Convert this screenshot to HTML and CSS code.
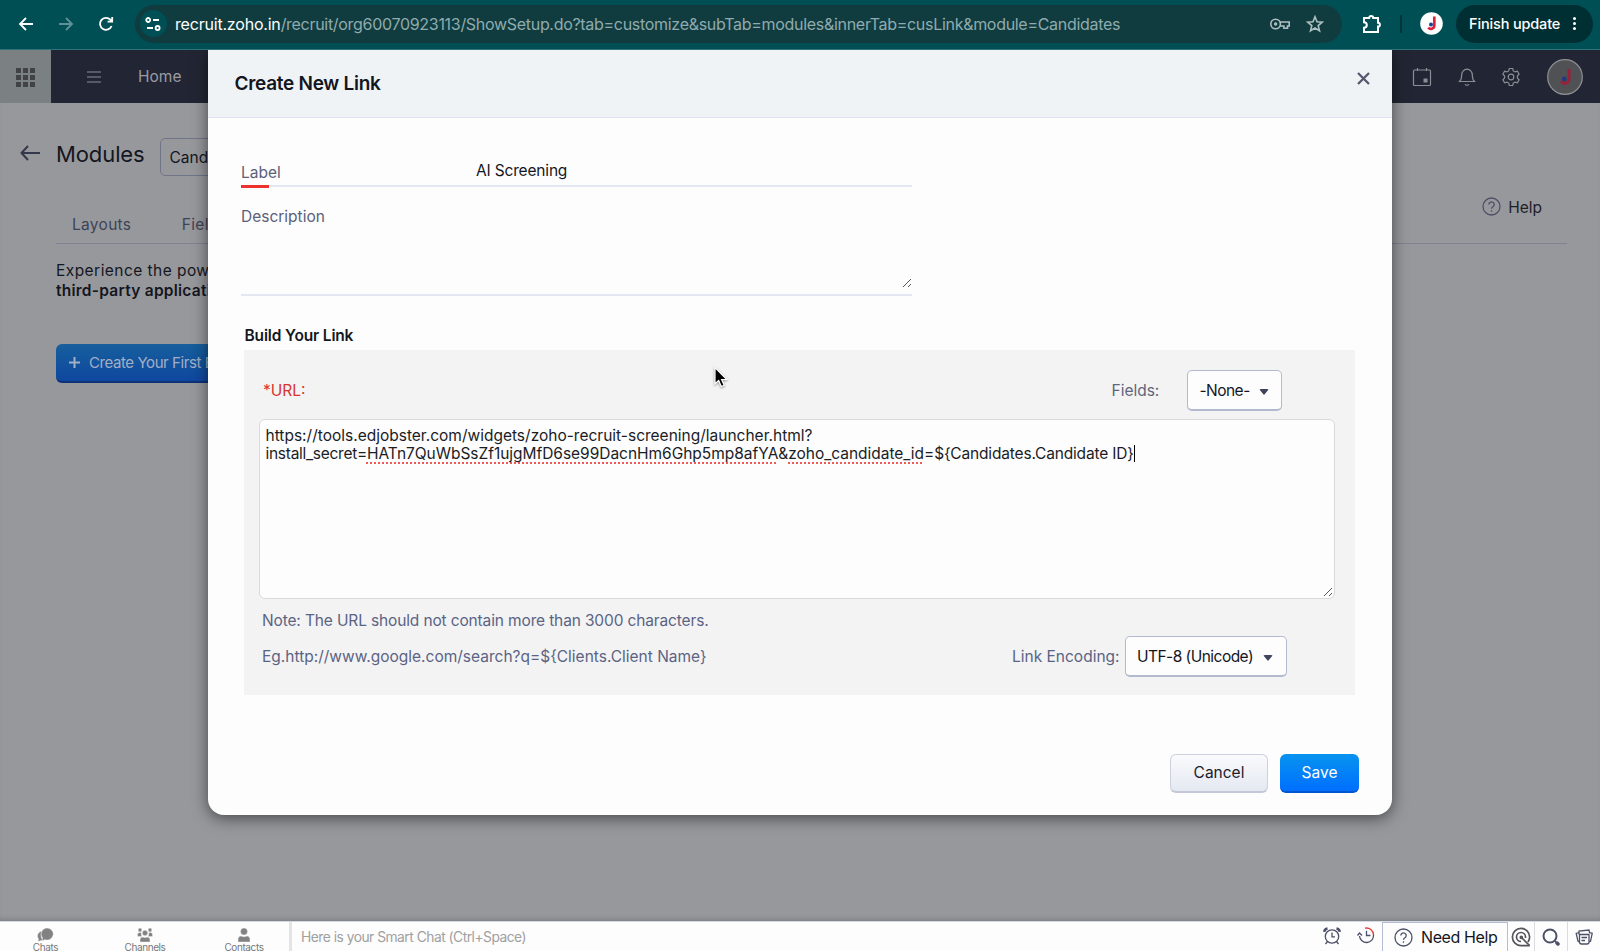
FILE: index.html
```
<!DOCTYPE html>
<html lang="en">
<head>
  <meta charset="UTF-8" />
  <meta name="viewport" content="width=device-width, initial-scale=1.0"/>
  <title>Create New Link - Zoho Recruit</title>
  <link rel="stylesheet" href="styles.css">
</head>
<body>
  <!-- Browser toolbar -->
  <div class="browser">
    <div class="browser-nav">
      <svg width="16" height="16" viewBox="0 0 16 16"><path d="M8 2 2 8l6 6M2 8h13"/></svg>
      <svg class="dim" width="16" height="16" viewBox="0 0 16 16"><path d="M8 2l6 6-6 6M14 8H1"/></svg>
      <svg width="16" height="16" viewBox="0 0 16 16"><path d="M13.6 10A6 6 0 1 1 12.4 3.7L14 5.4M14.2 1v4.6H9.6"/></svg>
    </div>
    <div class="address">
      <span class="site-info">
        <svg width="16" height="14" viewBox="0 0 16 14"><circle cx="3.2" cy="3" r="2"/><path d="M8 3h6M2 11h6"/><circle cx="12.6" cy="11" r="2"/></svg>
      </span>
      <span class="url"><b>recruit.zoho.in</b>/recruit/org60070923113/ShowSetup.do?tab=customize&amp;subTab=modules&amp;innerTab=cusLink&amp;module=Candidates</span>
      <svg class="key" width="20" height="12" viewBox="0 0 20 12"><circle cx="5.6" cy="6" r="4.8"/><circle class="dot" cx="5.6" cy="6" r="1.7"/><path d="M10 4h9.2v4h-1.7v2.2h-3.6V8H10"/></svg>
      <svg class="star" width="18" height="18" viewBox="0 0 18 18"><path d="M9 1.8l2 5 5.3.4-4.1 3.4 1.3 5.2L9 13l-4.500 2.800 1.300-5.200L1.700 7.200 7 6.800z"/></svg>
    </div>
    <svg class="puzzle" width="20" height="20" viewBox="0 0 20 20"><path d="M2 4h5.200a2 2 0 0 1 4 0H16v4.800a1.900 1.900 0 0 1 0 3.800V18H2v-4.200a2.800 2.800 0 0 0 0-5.600z"/></svg>
    <span class="bar"></span>
    <svg class="profile" width="23" height="23" viewBox="0 0 23 23"><circle cx="11.500" cy="11.500" r="11.300" fill="#fff"/><path d="M14.300 4.500v9.200a3.300 3.300 0 0 1-6 1.700" stroke="#e0203c" stroke-width="2.700" fill="none"/><circle cx="11" cy="12.600" r="2" fill="#21418f"/></svg>
    <div class="update"><span>Finish update</span><i></i></div>
  </div>

  <div class="app">
    <!-- Page behind the dialog -->
    <div class="topbar">
      <div class="waffle"><i></i><i></i><i></i><i></i><i></i><i></i><i></i><i></i><i></i></div>
      <svg class="burger" width="14" height="12" viewBox="0 0 14 12"><path d="M0 1h14M0 6h14M0 11h14"/></svg>
      <span class="home">Home</span>
      <div class="topbar-icons">
        <svg width="20" height="20" viewBox="0 0 20 20"><path d="M2.500 3h15q1 0 1 1v13.500q0 1-1 1h-15q-1 0-1-1V4q0-1 1-1zM5.500 1v3M14.500 1v3"/><path class="solid" d="M11.500 11.500h4v4h-4z"/></svg>
        <svg width="18" height="20" viewBox="0 0 18 20"><path d="M1.500 14.500c2-1.800 2.200-3 2.200-6.500a5.300 5.800 0 0 1 10.600 0c0 3.500.2 4.700 2.200 6.500zM7 17.300a2.200 1.600 0 0 0 4 0"/></svg>
        <svg width="20" height="20" viewBox="0 0 20 20"><circle cx="10" cy="10" r="2.800"/><path d="M8.300 1.500h3.400l.6 2.400 1.700 1 2.400-.7 1.700 2.900L16.400 9v2l1.700 1.900-1.700 2.900-2.400-.7-1.700 1-.6 2.400H8.300l-.6-2.400-1.700-1-2.400.7-1.700-2.900L3.600 11V9L1.900 7.100l1.700-2.900 2.400.7 1.700-1z"/></svg>
        <svg class="me" width="36" height="36" viewBox="0 0 36 36"><circle cx="18" cy="18" r="17.300" fill="#505155" stroke="#8e9094"/><path d="M22 10v10.500a4 4 0 0 1-7.600 1.600" stroke="#98203a" stroke-width="3" fill="none"/><circle cx="17.300" cy="20" r="2.400" fill="#203a7c"/></svg>
      </div>
    </div>
    <div class="page">
      <div class="page-head">
        <svg width="20" height="16" viewBox="0 0 20 16"><path d="M8 1 1.500 8 8 15M1.500 8H20"/></svg>
        <h1>Modules</h1>
        <span class="module-select">Candidates</span>
      </div>
      <div class="tabs">
        <span>Layouts</span>
        <span>Fields</span>
        <span class="help"><svg width="19" height="19" viewBox="0 0 19 19"><circle cx="9.500" cy="9.500" r="8.500"/><path d="M6.800 7.600a2.700 2.600 0 1 1 4.200 2.100c-1 .7-1.500 1-1.500 2.100M9.500 13.300v1.400"/></svg>Help</span>
      </div>
      <p>Experience the power<br><b>third-party applications</b></p>
      <span class="create"><svg width="11" height="11" viewBox="0 0 11 11"><path d="M5.500 0v11M0 5.500h11"/></svg>Create Your First Button</span>
    </div>

    <!-- Create link dialog -->
    <div class="modal">
      <div class="modal-head">
        <h2>Create New Link</h2>
        <svg width="13" height="13" viewBox="0 0 13 13"><path d="M1 1l11 11M12 1 1 12"/></svg>
      </div>
      <div class="field label-field"><label>Label</label><span>AI Screening</span></div>
      <div class="field desc-field"><label>Description</label>
        <svg class="grip" width="10" height="10" viewBox="0 0 10 10"><path d="M1 9 9 1M6 9l3-3"/></svg>
      </div>
      <h3>Build Your Link</h3>
      <div class="builder">
        <div class="row url-row">
          <span class="required">*URL:</span>
          <span class="fields-label">Fields:</span>
          <span class="select fields">-None-<i></i></span>
        </div>
        <div class="textarea">
          <div>https://tools.edjobster.com/widgets/zoho-recruit-screening/launcher.html?</div>
          <div><span class="param">install_secret=</span><u>HATn7QuWbSsZf1ujgMfD6se99DacnHm6Ghp5mp8afYA</u>&amp;<u>zoho_candidate_id</u><span class="merge">=${Candidates.Candidate ID}</span><i class="caret"></i></div>
          <svg class="grip" width="10" height="10" viewBox="0 0 10 10"><path d="M1 9 9 1M6 9l3-3"/></svg>
        </div>
        <div class="note">Note: The URL should not contain more than 3000 characters.</div>
        <div class="row encoding-row">
          <span class="example">Eg.http://www.google.com/search?q=${Clients.Client Name}</span>
          <span class="encoding-label">Link Encoding:</span>
          <span class="select encoding">UTF-8 (Unicode)<i></i></span>
        </div>
      </div>
      <div class="actions">
        <button class="cancel">Cancel</button>
        <button class="save">Save</button>
      </div>
    </div>
    <svg class="pointer" width="18" height="24" viewBox="0 0 18 24"><path d="M3 1.500v16.300l3.700-3.300 2.600 6 2.900-1.200-2.600-5.800h5.200z"/></svg>
  </div>

  <!-- Chat bar -->
  <div class="chatbar">
    <div class="chat-tabs">
      <div><svg width="17" height="14" viewBox="0 0 17 14"><path d="M5 3A5 5 0 0 0 1.500 11L1 13.500 4 12.600h3C4 11 3 7 5 3z"/><path d="M10 0a6.300 6 0 1 1-2 11.700L5 12.500l.6-2.500A6.100 6.100 0 0 1 10 0z"/></svg>Chats</div>
      <div><svg width="16" height="14" viewBox="0 0 16 14"><circle cx="3" cy="2" r="1.900"/><circle cx="13" cy="2" r="1.900"/><circle cx="8" cy="5" r="2.700"/><path d="M.5 8.500V6.500q0-2 2-2h1.800Q4 7 5 8.500zM15.500 8.500V6.500q0-2-2-2h-1.800Q12 7 11 8.500zM3 14v-2q0-3 3-3 2 1 4 0 3 0 3 3v2z"/></svg>Channels</div>
      <div><svg width="14" height="14" viewBox="0 0 14 14"><circle cx="7" cy="3.500" r="3.500"/><path d="M1 14v-2.500Q1 8 4 8q3 1.500 6 0 3 0 3 3.500V14z"/></svg>Contacts</div>
    </div>
    <div class="smart">Here is your Smart Chat (Ctrl+Space)</div>
    <div class="tools">
      <svg class="alarm" width="18" height="18" viewBox="0 0 18 18"><circle cx="9" cy="9.500" r="6.700"/><path d="M9 5.500v4.300h3M4.500 14.500 2.500 17M13.500 14.500l2 2.500"/><path class="bells" d="M1.200 4.800Q1.500 2 4.500 1.500M16.800 4.800Q16.500 2 13.500 1.500"/></svg>
      <svg class="history" width="18" height="18" viewBox="0 0 18 18"><path d="M2.500 10A7 7 0 1 0 16.500 9M9.500 4.800v4.700h4M.5 9.500l2-2.500L5 9.500"/><path class="red" d="M8 2.200A7 7 0 0 1 16.500 9"/></svg>
      <div class="need"><svg width="19" height="19" viewBox="0 0 19 19"><circle cx="9.500" cy="9.500" r="8.500"/><path d="M6.800 7.600a2.700 2.600 0 1 1 4.200 2.100c-1 .7-1.500 1-1.500 2.100M9.500 13.300v1.400"/></svg>Need Help</div>
      <div class="cell zia"><svg width="20" height="20" viewBox="0 0 20 20"><path d="M18.800 18.600H10A8.600 8.600 0 1 1 18.600 10c0 2-.6 3.600-1.600 5M10 14.500A4.500 4.500 0 1 1 14.500 10v1"/><path d="M10.500 10.500l8 8"/><circle cx="10.300" cy="10.300" r="1"/></svg></div>
      <div class="cell search"><svg width="18" height="18" viewBox="0 0 18 18"><circle cx="8" cy="8" r="6.500"/><path d="M13 13l1 1"/><path class="handle" d="M15 15l1 1"/></svg></div>
      <div class="cell cards"><svg width="18" height="18" viewBox="0 0 18 18"><path d="M4.500 6.500h9.500v7.500q0 2-2 2H6.500q-2 0-2-2zM6.500 9.500h5.500M6.500 12.500h3.500M4.500 14l-1.500-.7L1.200 5.500 4 4.500M4 6.500V3L14 2l.5 2.500 2.700.8L15.500 13.300 14 14"/></svg></div>
    </div>
  </div>
</body>
</html>
```
FILE: styles.css
```
* { box-sizing: border-box; }

body {
  margin: 0;
  height: 951px;
  display: flex;
  flex-direction: column;
  overflow: hidden;
  font-family: Inter, "Liberation Sans", sans-serif;
  font-size: 15.5px;
  line-height: 20px;
  color: #14161f;
  background: #97989c;
}

h1, h2, h3, p { margin: 0; }

svg {
  display: block;
  flex: none;
  fill: none;
  stroke: #4c5068;
  stroke-width: 1.3;
}

/* browser toolbar */
.browser {
  height: 50px;
  flex: none;
  display: flex;
  align-items: center;
  background: #004f55;
  border-bottom: 1px solid #2f7277;
  padding: 0 7px 2px 18px;
}
.browser svg { stroke: #fff; stroke-width: 1.8; }
.browser svg.dim { stroke: #5f9296; }
.browser-nav { display: flex; gap: 24px; width: 117px; margin-left: -0.5px; }
.address {
  width: 1207px;
  height: 38px;
  border-radius: 19px;
  background: #103c40;
  display: flex;
  align-items: center;
  padding: 0 18px 0 5px;
}
.site-info {
  width: 27px;
  height: 27px;
  border-radius: 50%;
  background: #004f55;
  display: flex;
  align-items: center;
  justify-content: center;
}
.url {
  flex: 1;
  margin-left: 8.5px;
  font-size: 16px;
  letter-spacing: -0.3px;
  color: #8fabad;
  white-space: nowrap;
}
.url b { font-weight: 400; letter-spacing: -0.2px; color: #fff; }
.browser .key, .browser .star { stroke: #b0bfc1; stroke-width: 1.6; }
.browser .dot { fill: #b0bfc1; stroke: none; }
.star { margin-left: 16px; }
.browser .puzzle { margin-left: 20px; stroke-width: 2; }
.bar { width: 2px; height: 18px; margin: 0 18px; background: #00363a; }
.browser .profile { stroke: none; }
.update {
  width: 137px;
  height: 38px;
  border-radius: 19px;
  margin-left: auto;
  padding: 0 17px 0 13px;
  display: flex;
  align-items: center;
  justify-content: space-between;
  background: #002f33;
  color: #fff;
  font-size: 14.5px;
  font-weight: 500;
  letter-spacing: -0.15px;
}
.update i {
  width: 3px;
  height: 3px;
  border-radius: 50%;
  background: #fff;
  box-shadow: 0 -5px #fff, 0 5px #fff;
}

/* page behind the dialog */
.app { flex: 1; position: relative; overflow: hidden; box-shadow: inset 0 -5px 5px -3px #7f8084; }
.topbar {
  height: 53px;
  display: flex;
  align-items: center;
  background: #222634;
  color: #9a9ca2;
}
.topbar svg { stroke: #8b8d94; stroke-width: 1.2; }
.waffle {
  width: 51px;
  height: 53px;
  padding: 18px 16px 0;
  display: grid;
  grid-template-columns: repeat(3, 5px);
  grid-auto-rows: 5px;
  gap: 2px;
  background: #7b8082;
}
.waffle i { background: #404246; }
.burger { margin-left: 36px; }
.home { margin-left: 37px; }
.topbar-icons { display: flex; align-items: center; margin-left: auto; padding-right: 17.5px; gap: 25.5px; }
.topbar .solid { fill: #8b8d94; stroke: none; }
.topbar .me { stroke: none; }

.page { padding: 30px 33px 0 20px; }
.page-head { display: flex; align-items: center; height: 42px; }
.page-head svg { stroke: #34384c; stroke-width: 2; margin-bottom: 2px; }
h1 { margin-left: 16px; width: 103.5px; font-size: 22px; font-weight: 400; line-height: 26px; letter-spacing: -0.1px; }
.module-select {
  width: 120px;
  height: 38px;
  margin-top: 5px;
  padding: 9px;
  border: 1px solid #6f7688;
  border-radius: 5px;
}
.tabs {
  display: flex;
  gap: 50.5px;
  height: 69px;
  margin-left: 36px;
  padding: 40px 25px 0 16px;
  border-bottom: 1px solid #7d8392;
  color: #3e4356;
  letter-spacing: 0.3px;
}
.help { display: flex; align-items: center; height: 20px; margin: -17px 0 0 auto; color: #1e2028; gap: 7px; letter-spacing: 0; }
.help svg { margin-bottom: 4px; }
.page p { margin: 17px 0 0 36px; letter-spacing: 0.45px; }
.page p b { font-weight: 600; letter-spacing: 0.25px; }
.create {
  display: flex;
  align-items: center;
  width: 240px;
  height: 39px;
  margin: 43px 0 0 36px;
  padding: 0 13px;
  gap: 9px;
  border-radius: 6px;
  background: linear-gradient(#165f9c, #0f47a0);
  border-bottom: 2px solid #0c3278;
  color: #a3afc4;
  white-space: nowrap;
  font-size: 15px;
  letter-spacing: -0.42px;
}
.create svg { stroke: #a3afc4; stroke-width: 2; }

/* dialog */
.modal {
  position: absolute;
  left: 208px;
  top: 0;
  width: 1184px;
  height: 765px;
  background: #fdfdfd;
  border-radius: 0 0 16px 16px;
  box-shadow: 0 3px 16px rgba(0, 0, 0, 0.55);
}
.modal-head {
  height: 68px;
  padding: 0 22px 0 26.5px;
  display: flex;
  align-items: center;
  justify-content: space-between;
  background: #eff3f6;
  border-bottom: 1px solid #dfe1ef;
}
.modal-head svg { stroke: #55586f; stroke-width: 2.3; margin-bottom: 10px; }
h2 { font-size: 19px; font-weight: 600; line-height: 24px; letter-spacing: -0.28px; }
.field {
  display: flex;
  width: 671px;
  margin-left: 33px;
  border-bottom: 2px solid #e4e7f2;
  color: #5b6079;
}
.label-field {
  height: 69px;
  padding-top: 42.5px;
  position: relative;
}
.label-field label { padding-top: 2.5px; width: 235px; }
.label-field span { color: #14161f; letter-spacing: -0.17px; }
.label-field::after {
  content: "";
  position: absolute;
  left: 0;
  bottom: -3px;
  width: 28px;
  height: 3px;
  background: #f0302a;
}
.desc-field {
  height: 109px;
  padding: 20px 0 6px;
  justify-content: space-between;
}
.desc-field .grip { align-self: flex-end; }
.grip { stroke: #555; stroke-width: 1; }
h3 { margin: 30px 0 4px 36.5px; font-size: 15.5px; font-weight: 600; line-height: 20px; letter-spacing: -0.15px; }
.builder {
  width: 1111px;
  height: 345px;
  margin-left: 36.4px;
  padding: 20px 20px 0 14.6px;
  background: #f3f3f3;
  color: #5b6384;
}
.row { display: flex; align-items: center; height: 41px; }
.required { width: 852.5px; padding-left: 4px; color: #d6352c; }
.fields-label { width: 76px; color: #5f657b; }
.select {
  height: 41px;
  display: flex;
  align-items: center;
  justify-content: space-between;
  padding: 1px 12px 0 11px;
  background: #fdfdfd;
  border: 1px solid #b3bace;
  border-bottom-width: 2px;
  border-radius: 5px;
  color: #14161f;
  letter-spacing: -0.53px;
}
.select i {
  border: 5px solid transparent;
  border-top: 6px solid #40445c;
  border-bottom: 0;
  border-radius: 2px;
  margin-top: 2px;
}
.fields { width: 95px; }
.textarea {
  position: relative;
  height: 180px;
  margin-top: 8px;
  padding: 7px 6px 6px 5.5px;
  background: #fdfdfd;
  border: 1px solid #dadada;
  border-radius: 6px;
  line-height: 18px;
  color: #1a1c26;
  white-space: nowrap;
}
.textarea u {
  letter-spacing: -0.03px;
  text-decoration: underline dotted #ee5a55 1.5px;
  text-underline-offset: 3px;
  text-decoration-skip-ink: none;
}
.param { letter-spacing: -0.27px; }
.merge { letter-spacing: -0.17px; }
.caret { display: inline-block; width: 1px; height: 17px; vertical-align: -3px; background: #000; }
.textarea .grip { position: absolute; right: 1px; bottom: 1px; }
.note { margin: 12px 0 0 3px; letter-spacing: -0.14px; }
.encoding-row { margin-top: 5px; padding-left: 3px; }
.example { width: 750px; }
.encoding-label { width: 113px; }
.encoding { width: 162px; padding-right: 13px; }
.actions {
  display: flex;
  justify-content: flex-end;
  gap: 12px;
  margin-top: 59px;
  padding-right: 33px;
}
button {
  height: 39px;
  border-radius: 6px;
  padding: 0;
  font: 15.5px/20px Inter, "Liberation Sans", sans-serif;
}
.cancel {
  width: 98px;
  color: #1d2029;
  background: linear-gradient(#f9fafc, #e4e8f1);
  border: 1px solid #cdd0df;
  border-bottom: 2px solid #c3c7d8;
}
.save {
  width: 79px;
  color: #fff;
  background: linear-gradient(#0793ef, #006fff);
  border: 0;
  border-bottom: 2px solid #0057cf;
}
.pointer {
  position: absolute;
  left: 712px;
  top: 316px;
  fill: #000;
  stroke: #fff;
  stroke-width: 1.2;
  filter: drop-shadow(0 1px 1px rgba(0, 0, 0, 0.4));
}

/* chat bar */
.chatbar {
  height: 30px;
  flex: none;
  display: flex;
  background: #fdfdfd;
  border-top: 1px solid #d5d9e4;
}
.chat-tabs { width: 292px; display: flex; border-right: 3px solid #e4e4e6; }
.chat-tabs div {
  width: 99px;
  flex: none;
  padding: 6px 0 0 0;
  display: flex;
  flex-direction: column;
  align-items: center;
  font-size: 10px;
  line-height: 11px;
  letter-spacing: -0.4px;
  color: #777;
}
.chat-tabs div:first-child { width: 91px; }
.chat-tabs div:nth-child(2) { width: 108px; }
.chat-tabs div:nth-child(3) { width: 90px; }
.chat-tabs svg { fill: #828282; stroke: #fdfdfd; stroke-width: 0.4; }
.smart { padding: 5px 9px; font-size: 13.8px; letter-spacing: -0.5px; color: #a0a0a0; }
.tools { display: flex; align-items: flex-start; margin-left: auto; }
.alarm { margin: 5px 16px 0 0; }
.alarm .bells { stroke-width: 2.4; }
.history { margin: 4px 7px 0 0; }
.tools .red { stroke: #e63a3a; }
.need {
  display: flex;
  align-items: center;
  width: 126px;
  height: 29px;
  padding-left: 11px;
  gap: 8px;
  border: 1px solid #b5bdd4;
  border-width: 1px 1px 0 1px;
  font-size: 16px;
  letter-spacing: -0.38px;
  white-space: nowrap;
}
.cell { height: 29px; width: 33px; display: flex; align-items: center; justify-content: center; border-left: 1px solid #dcdcdf; }
.zia { width: 26px; border-left: 0; }
.zia svg { stroke: #55565c; stroke-width: 1.7; }
.search svg { stroke-width: 2; }
.search .handle { stroke-width: 3.5; stroke-linecap: round; }
```
